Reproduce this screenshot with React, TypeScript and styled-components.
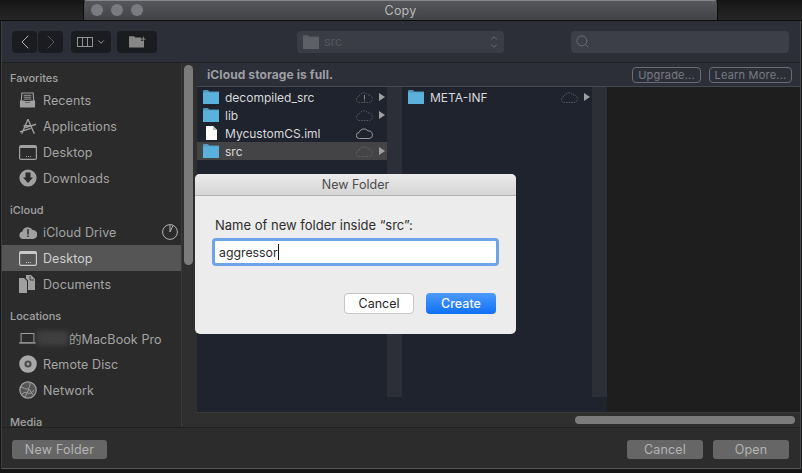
import styled, { createGlobalStyle } from "styled-components";
import { ChevronLeft, ChevronRight, ChevronDown, ChevronUp, Search } from "lucide-react";

const GlobalStyle = createGlobalStyle`
  html, body {
    margin: 0;
    padding: 0;
    background: #161616;
    overflow: hidden;
  }
  * { box-sizing: border-box; }
`;

const FolderIcon = ({ size = 16, color = "#5ab1dc" }: { size?: number; color?: string }) => (
  <svg width={size} height={size - 2} viewBox="0 0 16 14">
    <path d="M0 1.2C0 .5.5 0 1.2 0h3.6l1.6 1.6H16V14H0z" fill={color} opacity="0.8" />
    <rect x="0" y="2.4" width="16" height="11.6" fill={color} />
  </svg>
);

const FileIcon = () => (
  <svg width="11" height="14" viewBox="0 0 11 14">
    <path d="M0 0h7l4 4v10H0z" fill="#fff" />
    <path d="M7 0v4h4z" fill="#bbb" />
  </svg>
);

const CloudIcon = ({ dashed, alert }: { dashed?: boolean; alert?: boolean }) => (
  <svg width="17" height="11" viewBox="0 0 17 11" fill="none">
    <path
      d="M4 10.5H3.5a3 3 0 0 1-.4-6A5 5 0 0 1 12 3a3.6 3.6 0 0 1 1.2 7.5z"
      stroke={dashed ? "#6c6f75" : "#b4b5b8"}
      strokeWidth="0.8"
      strokeDasharray={dashed ? "1.4 1.2" : undefined}
    />
    {alert && <path d="M8.5 3v4.4M8.5 8.4v1" stroke="#8a8c90" strokeWidth="1" />}
  </svg>
);

const RecentsIcon = () => (
  <svg width="17" height="17" viewBox="0 0 18 18" fill="none">
    <path d="M3 1h12l.6 9H2.4z" fill="none" stroke="#a0a0a0" strokeWidth="1.2" />
    <path d="M5 3.5h8M5 5.5h8M5 7.5h8" stroke="#a0a0a0" strokeWidth="1" />
    <path d="M1 9h4.5l1 2h5l1-2H17v6.5a1 1 0 0 1-1 1H2a1 1 0 0 1-1-1z" fill="#a0a0a0" />
  </svg>
);

const AppsIcon = () => (
  <svg width="18" height="17" viewBox="0 0 20 18" fill="none" stroke="#a0a0a0" strokeWidth="1.5">
    <path d="M10 1 3 17M10 1l7 16M6 10.5 19 6.5M1 15l12-4M5 8h10" />
  </svg>
);

const DesktopIcon = ({ light }: { light?: boolean }) => {
  const c = light ? "#c9c9c9" : "#a0a0a0";
  return (
    <svg width="18" height="15" viewBox="0 0 18 15" fill="none">
      <rect x="0.6" y="0.6" width="16.8" height="13.8" rx="1.4" stroke={c} strokeWidth="1.2" />
      <rect x="1" y="1" width="16" height="2" fill={c} />
      <path d="M7 11.5h1M9 11.5h1M11 11.5h1" stroke={c} strokeWidth="1.2" />
    </svg>
  );
};

const DownloadsIcon = () => (
  <svg width="18" height="18" viewBox="0 0 18 18">
    <circle cx="9" cy="9" r="8.6" fill="#a0a0a0" />
    <path d="M6.5 3.5h5v5H14L9 14 4 8.5h2.5z" fill="#2b2b2b" />
  </svg>
);

const CloudAlertIcon = () => (
  <svg width="18" height="13" viewBox="0 0 18 13">
    <path d="M4 13a3.8 3.8 0 0 1-.6-7.5A5.6 5.6 0 0 1 13.6 4 4.5 4.5 0 0 1 14 13z" fill="#a0a0a0" />
    <path d="M9 3v5.5M9 9.6v1.4" stroke="#2b2b2b" strokeWidth="1.5" />
  </svg>
);

const DocumentsIcon = () => (
  <svg width="16" height="18" viewBox="0 0 16 18">
    <path d="M0 3h5l3 3v12H0z" fill="#a0a0a0" />
    <path d="M7 0h5l4 4v11H9V5.5L7 3.5z" fill="#a0a0a0" />
    <path d="M11 1v4h4" fill="none" stroke="#2b2b2b" strokeWidth="0.8" />
  </svg>
);

const LaptopIcon = () => (
  <svg width="17" height="11" viewBox="0 0 18 12" fill="none" stroke="#a0a0a0">
    <path d="M2 10V.6h14V10" strokeWidth="1.1" />
    <path d="M0 10.8h18" strokeWidth="1.6" />
  </svg>
);

const DiscIcon = () => (
  <svg width="18" height="18" viewBox="0 0 18 18">
    <circle cx="9" cy="9" r="8.8" fill="#a8a8a8" />
    <circle cx="9" cy="9" r="3.6" fill="#4e4e4e" />
    <circle cx="9" cy="9" r="1.4" fill="#a8a8a8" />
  </svg>
);

const NetworkIcon = () => (
  <svg width="18" height="18" viewBox="0 0 18 18" fill="none" stroke="#a0a0a0">
    <circle cx="9" cy="9" r="8.2" fill="#555" strokeWidth="1.2" />
    <path d="M2 6c3 1 4 2 6 2s3-3 3-6M10 8l-4 8M10 8l4 6M3 13c3-2 4-2 6-1s4 0 6-3" strokeWidth="1" />
  </svg>
);

const QuotaIcon = () => (
  <svg width="16" height="16" viewBox="0 0 16 16" fill="none" stroke="#b4b4b4">
    <circle cx="8" cy="8" r="7.4" strokeWidth="1" />
    <path d="M8 .8V8l3-6.5" strokeWidth="1" />
  </svg>
);

const ColumnsIcon = () => (
  <svg width="16" height="10" viewBox="0 0 16 10" fill="none" stroke="#a0a0a0" strokeWidth="0.9">
    <rect x="0.5" y="0.5" width="15" height="9" />
    <path d="M5.5 .5v9M10.5 .5v9" />
  </svg>
);

const NewFolderIcon = () => (
  <svg width="17" height="13" viewBox="0 0 17 13">
    <path d="M0 1.2h5l1.5 1.4h5.6V6H15v6.5H0z" fill="#868686" />
    <path d="M14.3 1.6v5M12 4.1h4.6" stroke="#868686" strokeWidth="1" />
  </svg>
);

const favorites = [
  { label: "Recents", icon: <RecentsIcon /> },
  { label: "Applications", icon: <AppsIcon /> },
  { label: "Desktop", icon: <DesktopIcon /> },
  { label: "Downloads", icon: <DownloadsIcon /> },
];

const files = [
  { name: "decompiled_src", cloud: <CloudIcon dashed alert />, folder: true },
  { name: "lib", cloud: <CloudIcon dashed />, folder: true },
  { name: "MycustomCS.iml", cloud: <CloudIcon />, folder: false },
  { name: "src", cloud: <CloudIcon dashed />, folder: true, selected: true },
];

export default function App() {
  return (
    <Screen>
      <GlobalStyle />
      <TitleRow>
        <TitleSide $w={83} />
        <TitleBar>
          <Lights>
            <Light />
            <Light />
            <Light />
          </Lights>
          Copy
        </TitleBar>
        <TitleSide $w={84} />
      </TitleRow>

      <Sheet>
        <Toolbar>
          <NavGroup>
            <ToolButton $w={25}>
              <ChevronLeft size={24} strokeWidth={1} color="#b4b4b4" />
            </ToolButton>
            <ToolButton $w={25}>
              <ChevronRight size={24} strokeWidth={1} color="#55565a" />
            </ToolButton>
          </NavGroup>
          <ToolButton $w={40}>
            <ColumnsIcon />
            <ChevronDown size={10} strokeWidth={2} color="#a8a8a8" />
          </ToolButton>
          <ToolButton $w={40}>
            <NewFolderIcon />
          </ToolButton>
          <PathPopup>
            <FolderIcon size={16} color="#5e6067" />
            <PathName>src</PathName>
            <Stepper>
              <ChevronUp size={10} strokeWidth={1.6} color="#85878c" />
              <ChevronDown size={10} strokeWidth={1.6} color="#85878c" />
            </Stepper>
          </PathPopup>
          <SearchBox>
            <Search size={15} strokeWidth={1.1} color="#7a7c82" />
          </SearchBox>
        </Toolbar>

        <Body>
          <Sidebar>
            <SideList>
              <SideHeading>Favorites</SideHeading>
              {favorites.map((f) => (
                <SideRow key={f.label}>
                  <SideIcon>{f.icon}</SideIcon>
                  {f.label}
                </SideRow>
              ))}
              <SideHeading $gap>iCloud</SideHeading>
              <SideRow>
                <SideIcon>
                  <CloudAlertIcon />
                </SideIcon>
                iCloud Drive
                <SideTail>
                  <QuotaIcon />
                </SideTail>
              </SideRow>
              <SideRow $active>
                <SideIcon>
                  <DesktopIcon light />
                </SideIcon>
                Desktop
              </SideRow>
              <SideRow>
                <SideIcon>
                  <DocumentsIcon />
                </SideIcon>
                Documents
              </SideRow>
              <SideHeading $gap>Locations</SideHeading>
              <SideRow>
                <SideIcon>
                  <LaptopIcon />
                </SideIcon>
                <Redacted />
                的MacBook Pro
              </SideRow>
              <SideRow>
                <SideIcon>
                  <DiscIcon />
                </SideIcon>
                Remote Disc
              </SideRow>
              <SideRow>
                <SideIcon>
                  <NetworkIcon />
                </SideIcon>
                Network
              </SideRow>
              <SideHeading $gap>Media</SideHeading>
            </SideList>
            <SideTrack>
              <SideThumb />
            </SideTrack>
          </Sidebar>

          <Browser>
            <Banner>
              <BannerText>iCloud storage is full.</BannerText>
              <OutlineButton $w={69}>Upgrade...</OutlineButton>
              <OutlineButton $w={83}>Learn More...</OutlineButton>
            </Banner>
            <Columns>
              <Column>
                <ColumnList>
                  {files.map((f) => (
                    <FileRow key={f.name} $selected={f.selected}>
                      <FileGlyph $inset={!f.folder}>{f.folder ? <FolderIcon /> : <FileIcon />}</FileGlyph>
                      <FileName>{f.name}</FileName>
                      {f.cloud}
                      <Arrow $hidden={!f.folder} />
                    </FileRow>
                  ))}
                </ColumnList>
                <ColumnStrip />
              </Column>
              <Column>
                <ColumnList>
                  <FileRow>
                    <FileGlyph>
                      <FolderIcon />
                    </FileGlyph>
                    <FileName>META-INF</FileName>
                    <CloudIcon dashed />
                    <Arrow />
                  </FileRow>
                </ColumnList>
                <ColumnStrip />
              </Column>
              <LastColumn />
            </Columns>
            <HScroll>
              <HThumb />
            </HScroll>
          </Browser>
        </Body>

        <Footer>
          <FooterButton $w={95}>New Folder</FooterButton>
          <FooterSpacer />
          <FooterButton $w={76}>Cancel</FooterButton>
          <FooterButton $w={76}>Open</FooterButton>
        </Footer>
      </Sheet>

      <Dialog>
        <DialogTitle>New Folder</DialogTitle>
        <DialogBody>
          <DialogLabel>Name of new folder inside “src”:</DialogLabel>
          <NameField>
            aggressor
            <Caret />
          </NameField>
          <DialogActions>
            <CancelButton>Cancel</CancelButton>
            <CreateButton>Create</CreateButton>
          </DialogActions>
        </DialogBody>
      </Dialog>
    </Screen>
  );
}

const Screen = styled.div`
  position: relative;
  width: 802px;
  height: 473px;
  overflow: hidden;
  font-family: Inter, "Noto Sans CJK SC", sans-serif;
  background: #161616;
`;

const TitleRow = styled.div`
  display: flex;
  height: 21px;
  border-bottom: 1px solid #0c0c0c;
`;

const TitleSide = styled.div<{ $w: number }>`
  width: ${(p) => p.$w}px;
  background: linear-gradient(#161616, #262626);
`;

const TitleBar = styled.div`
  position: relative;
  flex: 1;
  display: flex;
  align-items: center;
  justify-content: center;
  background: linear-gradient(#55575b, #414347);
  border-top: 1px solid #85878a;
  border-left: 1px solid #0c0c0c;
  border-right: 1px solid #0c0c0c;
  border-radius: 4px 4px 0 0;
  color: #b8b9bb;
  font-size: 12.5px;
  letter-spacing: 0.2px;
`;

const Lights = styled.div`
  position: absolute;
  left: 7px;
  top: 3px;
  display: flex;
  gap: 8px;
`;

const Light = styled.span`
  width: 12px;
  height: 12px;
  border-radius: 50%;
  background: #7a7b80;
`;

const Sheet = styled.div`
  width: 800px;
  height: 448px;
  margin-left: 1px;
  display: flex;
  flex-direction: column;
  border-right: 1px solid #4a4b4e;
  border-bottom: 1px solid #55565a;
  border-left: 1px solid #3c3d40;
`;

const Toolbar = styled.div`
  height: 42px;
  flex: none;
  display: flex;
  align-items: center;
  gap: 6px;
  padding-left: 10px;
  padding-right: 9px;
  background: #2c2f38;
  border-bottom: 1px solid #1f2026;
`;

const NavGroup = styled.div`
  display: flex;
  gap: 1px;
  margin-right: 2px;
`;

const ToolButton = styled.div<{ $w: number }>`
  width: ${(p) => p.$w}px;
  height: 22px;
  display: flex;
  align-items: center;
  justify-content: center;
  gap: 3px;
  background: #1b1c1f;
  border-radius: 4px;
`;

const PathPopup = styled.div`
  width: 207px;
  height: 22px;
  margin-left: 134px;
  display: flex;
  align-items: center;
  gap: 5px;
  padding: 0 5px 0 6px;
  background: #3a3d46;
  border-radius: 4px;
`;

const PathName = styled.span`
  flex: 1;
  color: #55575e;
  font-size: 12.5px;
`;

const Stepper = styled.div`
  display: flex;
  flex-direction: column;
  & svg {
    display: block;
    margin: -1px 0;
  }
`;

const SearchBox = styled.div`
  width: 218px;
  height: 22px;
  margin-left: 61px;
  display: flex;
  align-items: center;
  padding-left: 4px;
  background: #3c3f48;
  border-radius: 4px;
`;

const Body = styled.div`
  flex: 1;
  min-height: 0;
  display: flex;
`;

const Sidebar = styled.div`
  width: 195px;
  flex: none;
  display: flex;
  background: #2b2b2b;
  overflow: hidden;
`;

const SideList = styled.div`
  width: 179px;
  flex: none;
  padding-top: 6px;
`;

const SideHeading = styled.div<{ $gap?: boolean }>`
  height: 18px;
  margin-top: ${(p) => (p.$gap ? 10 : 0)}px;
  padding-left: 8px;
  display: flex;
  align-items: center;
  color: #a2a2a2;
  font-size: 11px;
  font-weight: 500;
`;

const SideRow = styled.div<{ $active?: boolean }>`
  height: 26px;
  display: flex;
  align-items: center;
  padding-left: 17px;
  background: ${(p) => (p.$active ? "#555555" : "transparent")};
  color: ${(p) => (p.$active ? "#cfcfcf" : "#a4a4a4")};
  font-size: 12.5px;
  letter-spacing: 0.1px;
`;

const SideIcon = styled.span`
  width: 24px;
  flex: none;
  display: flex;
  align-items: center;
  justify-content: flex-start;
`;

const SideTail = styled.span`
  margin-left: auto;
  margin-right: 3px;
  display: flex;
`;

const Redacted = styled.span`
  width: 31px;
  height: 14px;
  margin: 0 1px 0 -6px;
  background: #404040;
  filter: blur(2.5px);
`;

const SideTrack = styled.div`
  flex: 1;
  padding: 2px 2px 0 2px;
  background: #2f2f2f;
  border-left: 1px solid #3a3a3a;
`;

const SideThumb = styled.div`
  width: 9px;
  height: 200px;
  border-radius: 5px;
  background: #7b7b7b;
`;

const Browser = styled.div`
  flex: 1;
  min-width: 0;
  display: flex;
  flex-direction: column;
`;

const Banner = styled.div`
  height: 24px;
  flex: none;
  display: flex;
  align-items: center;
  gap: 8px;
  padding: 0 8px 0 10px;
  background: #2c2f38;
  border-bottom: 1px solid #464850;
`;

const BannerText = styled.span`
  flex: 1;
  color: #9d9fa4;
  font-size: 12px;
  font-weight: 700;
  letter-spacing: 0.1px;
`;

const OutlineButton = styled.div<{ $w: number }>`
  width: ${(p) => p.$w}px;
  height: 16px;
  display: flex;
  align-items: center;
  justify-content: center;
  border: 1px solid #6a6c72;
  border-radius: 4px;
  color: #797b81;
  font-size: 11px;
  letter-spacing: 0.2px;
`;

const Columns = styled.div`
  flex: 1;
  min-height: 0;
  display: flex;
`;

const Column = styled.div`
  width: 205px;
  flex: none;
  display: flex;
  background: #1f232d;
`;

const ColumnList = styled.div`
  width: 190px;
  flex: none;
  padding-top: 1px;
`;

const ColumnStrip = styled.div`
  flex: 1;
  margin-bottom: 15px;
  background: #2c2f38;
`;

const LastColumn = styled.div`
  flex: 1;
  background: #1e1e1e;
`;

const FileRow = styled.div<{ $selected?: boolean }>`
  height: 18px;
  display: flex;
  align-items: center;
  padding-left: 6px;
  padding-right: 2px;
  background: ${(p) => (p.$selected ? "#444446" : "transparent")};
`;

const FileGlyph = styled.span<{ $inset?: boolean }>`
  width: 22px;
  flex: none;
  display: flex;
  padding-left: ${(p) => (p.$inset ? 3 : 0)}px;
`;

const FileName = styled.span`
  flex: 1;
  color: #d8d9db;
  font-size: 12px;
`;

const Arrow = styled.span<{ $hidden?: boolean }>`
  width: 0;
  height: 0;
  margin-left: 6px;
  border-left: 6px solid ${(p) => (p.$hidden ? "transparent" : "#a0a0a0")};
  border-top: 4px solid transparent;
  border-bottom: 4px solid transparent;
`;

const HScroll = styled.div`
  height: 15px;
  flex: none;
  padding: 3px 5px 3px 378px;
  background: #2f2f2f;
  border-top: 1px solid #3a3a3a;
`;

const HThumb = styled.div`
  height: 8px;
  border-radius: 4px;
  background: #7b7b7b;
`;

const Footer = styled.div`
  height: 41px;
  flex: none;
  display: flex;
  align-items: center;
  gap: 10px;
  padding: 2px 11px 0 10px;
  background: #2c2c2c;
  border-top: 1px solid #1f1f1f;
`;

const FooterSpacer = styled.div`
  flex: 1;
`;

const FooterButton = styled.div<{ $w: number }>`
  width: ${(p) => p.$w}px;
  height: 19px;
  display: flex;
  align-items: center;
  justify-content: center;
  background: #666666;
  border-radius: 3px;
  color: #b4b4b4;
  font-size: 12.5px;
  letter-spacing: 0.2px;
`;

const Dialog = styled.div`
  position: absolute;
  left: 195px;
  top: 174px;
  width: 321px;
  height: 160px;
  display: flex;
  flex-direction: column;
  background: #ececec;
  border-radius: 5px;
  overflow: hidden;
`;

const DialogTitle = styled.div`
  height: 22px;
  flex: none;
  display: flex;
  align-items: center;
  justify-content: center;
  background: linear-gradient(#ebebeb, #d5d5d5);
  border-bottom: 1px solid #b4b4b4;
  color: #4c4c4c;
  font-size: 12.5px;
`;

const DialogBody = styled.div`
  flex: 1;
  display: flex;
  flex-direction: column;
  padding: 21px 20px 0;
`;

const DialogLabel = styled.div`
  height: 16px;
  display: flex;
  align-items: center;
  color: #2e2e2e;
  font-size: 13px;
  white-space: nowrap;
`;

const NameField = styled.div`
  width: 287px;
  height: 28px;
  margin: 5px 0 0 -3px;
  display: flex;
  align-items: center;
  padding-left: 4px;
  background: #fff;
  border: 3px solid #6fa2e8;
  border-radius: 4px;
  color: #2b2b2b;
  font-size: 12.3px;
`;

const Caret = styled.span`
  width: 1px;
  height: 16px;
  background: #111;
`;

const DialogActions = styled.div`
  display: flex;
  justify-content: flex-end;
  gap: 12px;
  margin-top: 27px;
`;

const CancelButton = styled.div`
  width: 70px;
  height: 21px;
  display: flex;
  align-items: center;
  justify-content: center;
  background: #fff;
  border: 1px solid #c6c6c6;
  border-radius: 4px;
  color: #262626;
  font-size: 12.5px;
`;

const CreateButton = styled.div`
  width: 70px;
  height: 21px;
  display: flex;
  align-items: center;
  justify-content: center;
  background: linear-gradient(#4d9bfb, #0f6ff5);
  border-radius: 4px;
  color: #f4f8ff;
  font-size: 12.5px;
  font-weight: 500;
`;
